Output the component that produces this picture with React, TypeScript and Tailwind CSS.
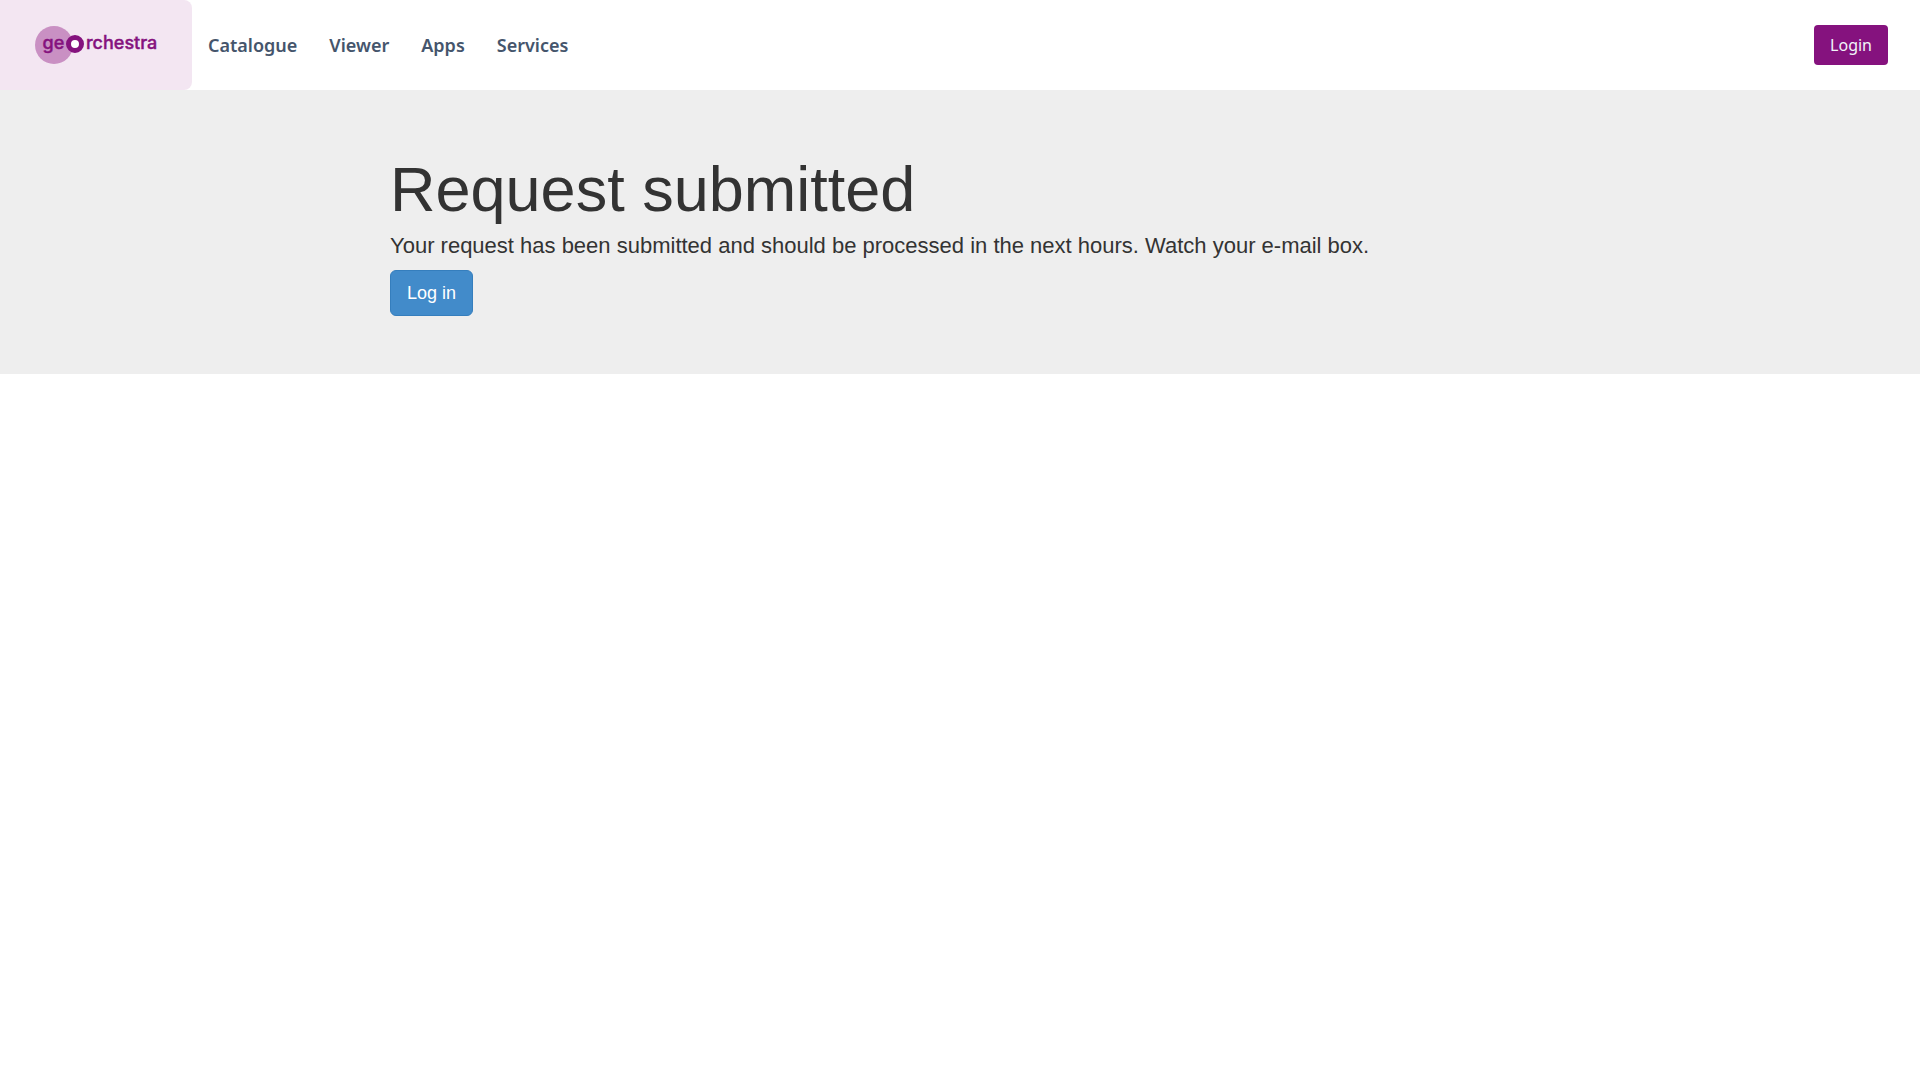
const links = ['Catalogue', 'Viewer', 'Apps', 'Services']

function Logo() {
  return (
    <svg viewBox="0 0 124 40" className="h-10 w-31" role="img" aria-label="geOrchestra">
      <circle cx="20" cy="20" r="19" fill="#c990c3" />
      <circle cx="41" cy="19" r="6.5" fill="#fff" stroke="#85127e" strokeWidth="5" />
      <g fill="#85127e" stroke="#85127e" strokeWidth="0.4" fontFamily="Inter, sans-serif" fontWeight="500" fontSize="18">
        <text x="8.5" y="24.4">ge</text>
        <text x="52" y="24.4">rchestra</text>
      </g>
    </svg>
  )
}

export default function App() {
  return (
    <div className="bg-white">
      <header className="flex h-[90px] items-center font-['Noto_Sans',sans-serif]">
        <a href="#" className="flex h-full w-48 items-center justify-center rounded-r-lg bg-[#f3e6f2]">
          <Logo />
        </a>
        <nav className="flex flex-1 gap-8 px-4 text-lg font-semibold text-slate-600">
          {links.map((l) => (
            <a key={l} href="#">{l}</a>
          ))}
        </nav>
        <a href="#" className="mr-8 rounded bg-[#85127e] px-4 py-2 text-base text-slate-100">Login</a>
      </header>
      <main className="bg-[#eee] pt-[68px] pb-[58px] font-['Liberation_Sans',Arial,sans-serif] text-[#333]">
        <div className="mx-auto flex max-w-[1140px] flex-col items-start gap-[10px]">
          <h1 className="text-[63px] leading-[63px]">Request submitted</h1>
          <p className="text-[22px] leading-[29px]">
            Your request has been submitted and should be processed in the next hours. Watch your e-mail box.
          </p>
          <a href="#" className="rounded-md border border-[#357ebd] bg-[#428bca] px-4 py-[10px] text-lg leading-6 text-white">
            Log in
          </a>
        </div>
      </main>
    </div>
  )
}
